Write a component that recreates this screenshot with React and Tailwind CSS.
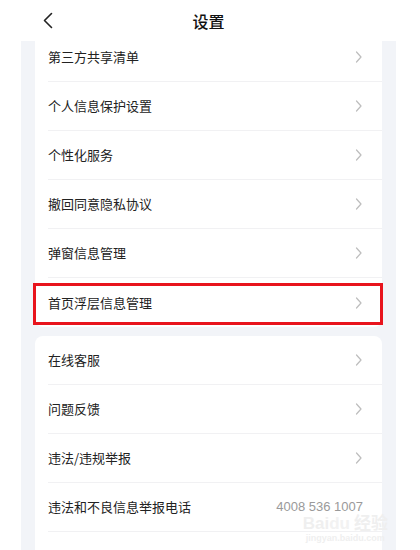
const font = { fontFamily: '"Noto Sans CJK SC", "Noto Sans", sans-serif' };

function Chevron() {
  return (
    <svg width="8" height="12" viewBox="0 0 8 12" fill="none">
      <polyline points="1.5,1 6,6 1.5,11" stroke="#bdbdbd" strokeWidth="1.2" strokeLinecap="round" strokeLinejoin="round" />
    </svg>
  );
}

function Row({ label, last, children, extra }) {
  return (
    <div className="relative pl-[13px]">
      <div className={"h-[49px] flex items-center justify-between pr-[19px] " + (last ? "" : "border-b border-[#f1f1f3]")}>
        <span className="text-[13px] text-[#222]">{label}</span>
        {children || <Chevron />}
      </div>
      {extra}
    </div>
  );
}

export default function App() {
  const first = ["第三方共享清单", "个人信息保护设置", "个性化服务", "撤回同意隐私协议", "弹窗信息管理"];
  const second = ["在线客服", "问题反馈", "违法/违规举报"];

  return (
    <div className="w-[420px] h-[550px] bg-white overflow-hidden" style={font}>
      <div className="w-[375px] h-full ml-[21px] flex flex-col">
        <div className="h-[41px] shrink-0 bg-white flex items-center justify-center relative">
          <svg className="absolute left-[21px] top-[12px]" width="12" height="17" viewBox="0 0 12 17" fill="none">
            <polyline points="9.5,1.5 2.5,8.5 9.5,15.5" stroke="#222" strokeWidth="1.6" strokeLinecap="round" strokeLinejoin="round" />
          </svg>
          <span className="text-[16px] font-medium text-[#111]">设置</span>
        </div>
        <div className="flex-1 bg-[#f2f4f8] overflow-hidden px-[14px]">
          <div className="-mt-[8px] bg-white rounded-b-lg">
            {first.map((t) => (
              <Row key={t} label={t} />
            ))}
            <Row
              label="首页浮层信息管理"
              last
              extra={<div className="absolute left-[-2px] right-[-1px] top-[5px] bottom-[2px] border-[3px] border-[#e8141d]" />}
            />
          </div>
          <div className="mt-[9px] bg-white rounded-lg">
            {second.map((t) => (
              <Row key={t} label={t} />
            ))}
            <Row
              label="违法和不良信息举报电话"
              extra={
                <div className="absolute right-[-6px] top-[30px] flex flex-col items-center leading-none pointer-events-none">
                  <span className="text-[17px] font-bold text-[#efefef]" style={{ fontFamily: '"Liberation Sans", sans-serif' }}>
                    Bai<span className="text-[#f2f2f2]">du</span>
                    <span className="ml-1" style={font}>经验</span>
                  </span>
                  <span className="mt-[2px] text-[9px] font-bold text-[#efefef]" style={{ fontFamily: '"Liberation Sans", sans-serif' }}>
                    jingyan.baidu.com
                  </span>
                </div>
              }
            >
              <span className="text-[13px] text-[#9a9a9a]" style={{ fontFamily: '"Liberation Sans", sans-serif' }}>
                4008 536 1007
              </span>
            </Row>
            <Row label="关于我们" last />
          </div>
        </div>
      </div>
    </div>
  );
}
